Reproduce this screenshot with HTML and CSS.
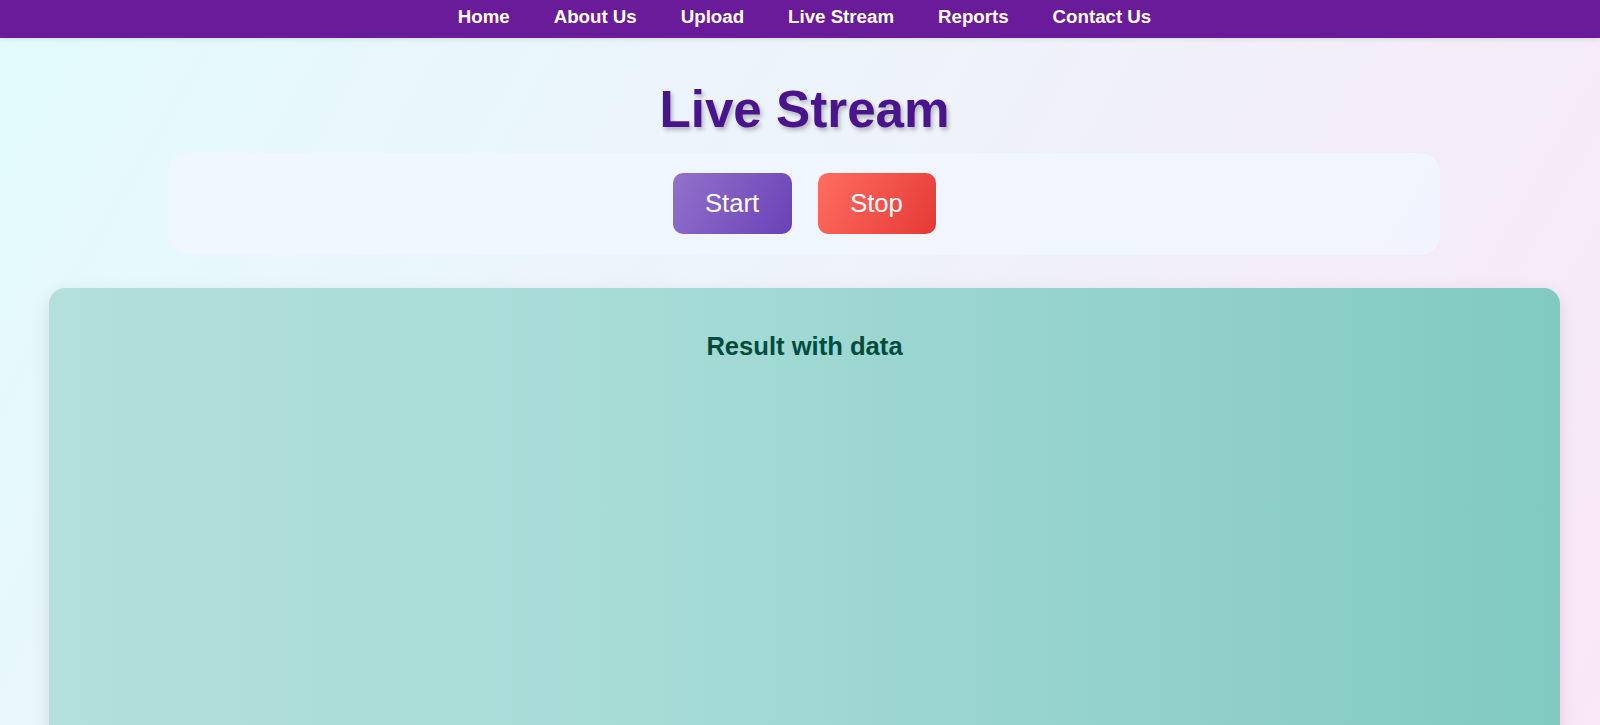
FILE: index.html
```html
<!DOCTYPE html>
<html lang="en">
<head>
<meta charset="utf-8">
<title>Live Stream</title>
<link rel="stylesheet" href="styles.css">
</head>
<body>
<nav class="topnav">
  <ul class="nav-list">
    <li><a href="#">Home</a></li>
    <li><a href="#">About Us</a></li>
    <li><a href="#">Upload</a></li>
    <li><a href="#">Live Stream</a></li>
    <li><a href="#">Reports</a></li>
    <li><a href="#">Contact Us</a></li>
  </ul>
</nav>
<main class="main">
  <h1 class="page-title">Live Stream</h1>
  <section class="controls">
    <button class="btn btn-start">Start</button>
    <button class="btn btn-stop">Stop</button>
  </section>
  <section class="result-card">
    <h2 class="result-title">Result with data</h2>
  </section>
</main>
</body>
</html>
```

FILE: styles.css
```css
html, body {
  margin: 0;
  padding: 0;
}
body {
  font-family: "Liberation Sans", Arial, sans-serif;
  min-height: 725px;
  overflow: hidden;
  background: linear-gradient(120deg, #e2fbfd 0%, #eef3fa 45%, #f4ecf8 75%, #fbe6f8 100%);
}
.topnav {
  background: #6a1b9a;
  height: 38px;
  box-shadow: 0 2px 4px rgba(0,0,0,0.08);
}
.nav-list {
  list-style: none;
  margin: 0;
  padding: 0 0 4px 9px;
  box-sizing: border-box;
  height: 38px;
  display: flex;
  justify-content: center;
  align-items: center;
  gap: 44px;
}
.nav-list a {
  color: #ffffff;
  text-decoration: none;
  font-weight: bold;
  font-size: 18.7px;
  line-height: 22px;
  display: block;
}
.main {
  padding: 0 40px 0 49px;
  display: flex;
  flex-direction: column;
}
.page-title {
  margin: 43px 0 14px;
  text-align: center;
  font-size: 51.2px;
  line-height: 58px;
  color: #4a148c;
  font-weight: bold;
  text-shadow: 2px 3px 4px rgba(0,0,0,0.25);
}
.controls {
  margin: 0 120px 33px 119px;
  padding: 20px 20px 21px;
  border-radius: 20px;
  background: rgba(240, 246, 255, 0.85);
  display: flex;
  justify-content: center;
  gap: 26px;
}
.btn {
  font-family: "Liberation Sans", Arial, sans-serif;
  font-size: 25.6px;
  line-height: 29px;
  padding: 16px 32px;
  border: none;
  border-radius: 10px;
  color: #ffffff;
  width: 119px;
  display: flex;
  justify-content: center;
}
.btn-start {
  background: linear-gradient(120deg, #9272cb 0%, #6b41b7 100%);
}
.btn-stop {
  width: 118px;
  background: linear-gradient(120deg, #ff6e60 0%, #e53935 100%);
}
.result-card {
  border-radius: 16px;
  padding: 44px 20px 40px;
  min-height: 500px;
  background: linear-gradient(90deg, #b3dfdc 0%, #a6dbd6 40%, #94d2cc 70%, #80cac2 100%);
  box-shadow: 0 6px 18px rgba(0,0,0,0.1);
}
.result-title {
  margin: 0;
  text-align: center;
  font-size: 25.6px;
  line-height: 29px;
  color: #004d40;
  font-weight: bold;
}
```
